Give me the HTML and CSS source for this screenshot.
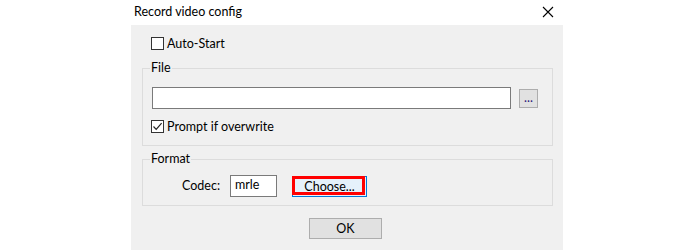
FILE: index.html
```html
<!DOCTYPE html>
<html>
<head>
<meta charset="utf-8">
<link rel="stylesheet" href="styles.css">
</head>
<body>
<div class="dialog">
  <div class="titlebar">
    <span class="title">Record video config</span>
    <svg class="close" width="12" height="12" viewBox="0 0 12 12"><path d="M1 1 L11 11 M11 1 L1 11" stroke="#000" stroke-width="1.1" fill="none"/></svg>
  </div>
  <div class="body">
    <div class="check-row autostart">
      <span class="box"></span>
      <span class="lbl">Auto-Start</span>
    </div>
    <div class="group file-group">
      <span class="legend">File</span>
      <div class="file-row">
        <div class="textbox path"></div>
        <button class="btn browse">...</button>
      </div>
      <div class="check-row prompt">
        <span class="box"><svg width="11" height="11" viewBox="0 0 11 11"><path d="M1.5 5.5 L4.2 8.3 L9.6 2.2" stroke="#222" stroke-width="1.2" fill="none"/></svg></span>
        <span class="lbl">Prompt if overwrite</span>
      </div>
    </div>
    <div class="group format-group">
      <span class="legend">Format</span>
      <div class="codec-row">
        <span class="codec-lbl">Codec:</span>
        <div class="textbox codec">mrle</div>
        <button class="btn choose">Choose...<span class="highlight"></span></button>
      </div>
    </div>
    <div class="ok-row">
      <button class="btn ok">OK</button>
    </div>
  </div>
</div>
</body>
</html>
```
FILE: styles.css
```css
html, body {
  margin: 0;
  padding: 0;
  background: #fff;
}
body {
  font-family: "Lato", "Noto Sans", "Liberation Sans", sans-serif;
  font-size: 12.5px;
  color: #000;
}
.dialog {
  margin-left: 131px;
  width: 432px;
}
.titlebar {
  height: 25px;
  display: flex;
  align-items: center;
  background: #fff;
}
.title {
  margin-left: 3px;
  margin-top: -2px;
}
.close {
  margin-left: auto;
  margin-right: 9px;
  margin-top: -1px;
}
.body {
  background: #f0f0f0;
  height: 225px;
  padding: 12px 10px 0 11px;
  box-sizing: border-box;
}
.check-row {
  display: flex;
  align-items: center;
  height: 13px;
}
.box {
  width: 13px;
  height: 13px;
  box-sizing: border-box;
  border: 1px solid #333;
  background: #fff;
  display: flex;
  align-items: center;
  justify-content: center;
}
.lbl {
  margin-left: 3px;
  line-height: 13px;
}
.autostart {
  margin-left: 9px;
}
.group {
  position: relative;
  border: 1px solid #dcdcdc;
  box-sizing: border-box;
}
.legend {
  position: absolute;
  top: -9px;
  left: 7px;
  padding: 0 1px;
  background: #f0f0f0;
  line-height: 16px;
}
.file-group {
  margin-top: 18px;
  height: 78px;
  padding: 18px 0 0 9px;
}
.file-row {
  display: flex;
  align-items: center;
}
.textbox {
  height: 22px;
  box-sizing: border-box;
  background: #fff;
  border: 1px solid #7a7a7a;
}
.path {
  width: 359px;
}
.btn {
  font-family: inherit;
  font-size: inherit;
  color: #000;
  background: #e1e1e1;
  border: 1px solid #adadad;
  box-sizing: border-box;
  padding: 0;
  margin: 0;
  position: relative;
}
.browse {
  width: 19px;
  height: 19px;
  margin-left: 8px;
  line-height: 12px;
  color: #2a1a7a;
}
.prompt {
  margin-top: 11px;
  margin-left: -1px;
}
.format-group {
  margin-top: 13px;
  height: 47px;
  padding: 15px 0 0 39px;
}
.codec-row {
  display: flex;
  align-items: center;
}
.codec-lbl {
  width: 48px;
  margin-top: -2px;
}
.codec {
  width: 47px;
  padding: 1px 0 0 4px;
  line-height: 16px;
}
.choose {
  margin-left: 15px;
  width: 75px;
  height: 21px;
  background: #e5f1fb;
  border-color: #0078d7;
  margin-top: 1px;
}
.highlight {
  position: absolute;
  left: -1px;
  top: -1px;
  right: 1px;
  bottom: 1px;
  border: 3px solid #ff0000;
  box-sizing: border-box;
}
.ok-row {
  margin-top: 12px;
  padding-left: 167px;
}
.ok {
  width: 73px;
  height: 21px;
}
```
